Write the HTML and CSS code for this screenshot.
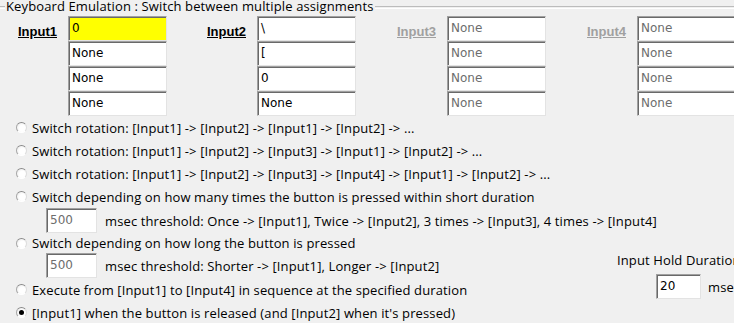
FILE: index.html
```html
<!DOCTYPE html>
<html lang="en">
<head>
  <meta charset="UTF-8" />
  <title>Keyboard Emulation</title>
  <link rel="stylesheet" href="styles.css">
</head>
<body>
  <div class="group">
    <div class="legend">
      <span class="legend-line short"></span>
      <span class="legend-text">Keyboard Emulation : Switch between multiple assignments</span>
      <span class="legend-line"></span>
    </div>

    <div class="inputs">
      <div class="col first">
        <div class="col-label">Input1</div>
        <div class="stack">
          <div class="box active">0</div>
          <div class="box">None</div>
          <div class="box">None</div>
          <div class="box">None</div>
        </div>
      </div>
      <div class="col">
        <div class="col-label">Input2</div>
        <div class="stack">
          <div class="box">\</div>
          <div class="box">[</div>
          <div class="box">0</div>
          <div class="box">None</div>
        </div>
      </div>
      <div class="col off">
        <div class="col-label">Input3</div>
        <div class="stack">
          <div class="box">None</div>
          <div class="box">None</div>
          <div class="box">None</div>
          <div class="box">None</div>
        </div>
      </div>
      <div class="col off">
        <div class="col-label">Input4</div>
        <div class="stack">
          <div class="box">None</div>
          <div class="box">None</div>
          <div class="box">None</div>
          <div class="box">None</div>
        </div>
      </div>
    </div>

    <div class="opts">
      <div class="opt"><span class="radio"></span>Switch rotation: [Input1] -&gt; [Input2] -&gt; [Input1] -&gt; [Input2] -&gt; ...</div>
      <div class="opt"><span class="radio"></span>Switch rotation: [Input1] -&gt; [Input2] -&gt; [Input3] -&gt; [Input1] -&gt; [Input2] -&gt; ...</div>
      <div class="opt"><span class="radio"></span>Switch rotation: [Input1] -&gt; [Input2] -&gt; [Input3] -&gt; [Input4] -&gt; [Input1] -&gt; [Input2] -&gt; ...</div>
      <div class="opt"><span class="radio"></span>Switch depending on how many times the button is pressed within short duration</div>
      <div class="sub">
        <div class="box small off-text">500</div>
        <span>msec threshold: Once -&gt; [Input1], Twice -&gt; [Input2], 3 times -&gt; [Input3], 4 times -&gt; [Input4]</span>
      </div>

      <div class="lower">
        <div class="lower-opts">
          <div class="opt tight"><span class="radio"></span>Switch depending on how long the button is pressed</div>
          <div class="sub">
            <div class="box small off-text">500</div>
            <span>msec threshold: Shorter -&gt; [Input1], Longer -&gt; [Input2]</span>
          </div>
          <div class="opt"><span class="radio"></span>Execute from [Input1] to [Input4] in sequence at the specified duration</div>
          <div class="opt"><span class="radio checked"></span>[Input1] when the button is released (and [Input2] when it's pressed)</div>
        </div>
        <div class="hold">
          <div class="hold-label">Input Hold Duration</div>
          <div class="hold-row">
            <div class="box hold-box">20</div>
            <span>msec</span>
          </div>
        </div>
      </div>
    </div>
  </div>
</body>
</html>
```

FILE: styles.css
```css
body {
  margin: 0;
  background-color: #f0f0f0;
  font-family: 'Open Sans', sans-serif;
  font-size: 13px;
  letter-spacing: 0.12px;
  color: #000;
  overflow: hidden;
  width: 734px;
  height: 323px;
}
.group {
  width: 760px;
}
.legend {
  display: flex;
  align-items: center;
  height: 13px;
  line-height: 13px;
}
.legend-line {
  flex: 1;
  height: 1px;
  border-top: 1px solid #bcbcbc;
  border-bottom: 1px solid #fff;
  margin-top: 1px;
}
.legend-line.short {
  flex: none;
  width: 5px;
}
.legend-text {
  white-space: nowrap;
  padding: 0 1px;
}

/* input columns */
.inputs {
  display: flex;
  padding-top: 3px;
}
.col {
  display: flex;
}
.col-label {
  width: 90px;
  box-sizing: border-box;
  padding-right: 11px;
  padding-top: 8px;
  text-align: right;
  font-family: 'Liberation Sans', Arial, sans-serif;
  font-weight: bold;
  font-size: 13px;
  letter-spacing: 0;
  text-decoration: underline;
  line-height: 15px;
}
.col.first .col-label {
  width: 68px;
  text-align: left;
  padding-left: 18px;
  padding-right: 0;
}
.col.off .col-label {
  color: #a0a0a0;
  width: 91px;
}
.stack {
  display: flex;
  flex-direction: column;
  width: 99px;
}
.box {
  box-sizing: border-box;
  height: 25px;
  background-color: #fff;
  border: 1px solid;
  border-color: #a0a0a0 #e3e3e3 #e3e3e3 #a0a0a0;
  box-shadow: inset 1px 1px 0 #696969;
  padding: 0 2px 0 3px;
  font-family: 'DejaVu Sans', sans-serif;
  font-size: 12px;
  letter-spacing: 0;
  line-height: 23px;
  white-space: nowrap;
  overflow: hidden;
}
.box.active {
  background-color: #ffff00;
}
.col.off .box,
.box.off-text {
  color: #6d6d6d;
}

/* radio options */
.opts {
  padding-left: 16px;
}
.opt {
  display: flex;
  align-items: center;
  height: 23px;
  white-space: nowrap;
}
.opt.tight {
  height: 20px;
}
.radio {
  flex: none;
  box-sizing: border-box;
  width: 11px;
  height: 11px;
  margin-right: 5px;
  border-radius: 50%;
  border: 1px solid;
  border-color: #8a8a8a #dcdcdc #ffffff #a8a8a8;
  background: radial-gradient(circle at 60% 60%, #ffffff 40%, #e6e6e6 100%);
  position: relative;
}
.radio.checked::after {
  content: '';
  position: absolute;
  left: 2px;
  top: 2px;
  width: 5px;
  height: 5px;
  border-radius: 50%;
  background-color: #000;
}
.sub {
  display: flex;
  align-items: center;
  height: 25px;
  padding-left: 30px;
  white-space: nowrap;
}
.box.small {
  width: 51px;
  margin-right: 8px;
}
.lower {
  display: flex;
}
.lower-opts {
  flex: none;
  width: 601px;
}
.hold {
  flex: none;
  white-space: nowrap;
  padding-top: 19px;
}
.hold-label {
  line-height: 16px;
}
.hold-row {
  display: flex;
  align-items: center;
  margin-top: 6px;
  padding-left: 39px;
}
.box.hold-box {
  width: 45px;
  margin-right: 7px;
  color: #000;
}
```
